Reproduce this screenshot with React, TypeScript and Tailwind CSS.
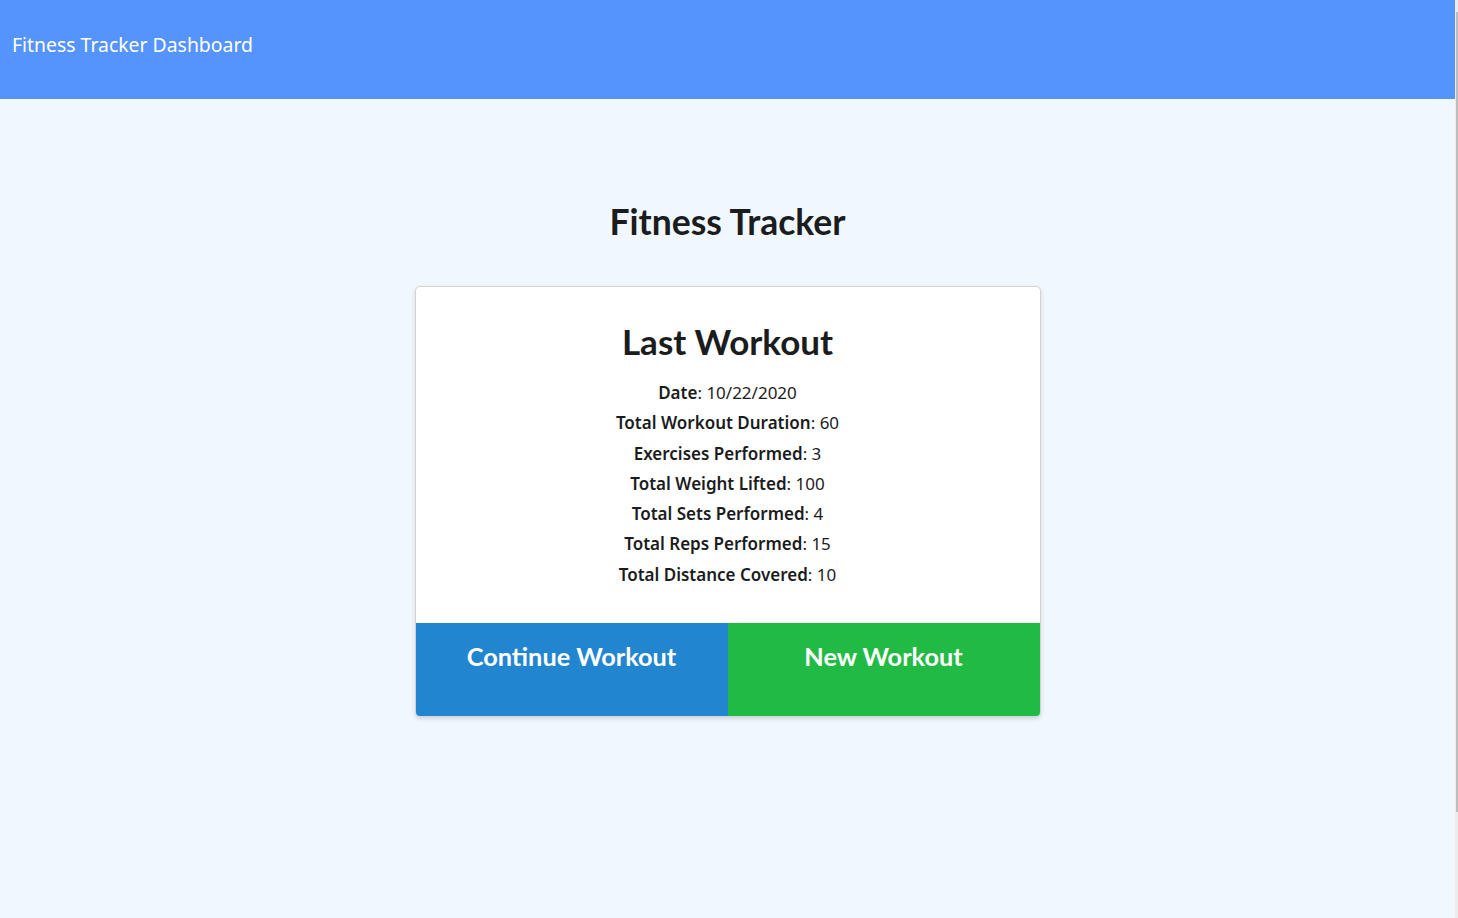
import React from "react";

const stats: [string, string][] = [
  ["Date", "10/22/2020"],
  ["Total Workout Duration", "60"],
  ["Exercises Performed", "3"],
  ["Total Weight Lifted", "100"],
  ["Total Sets Performed", "4"],
  ["Total Reps Performed", "15"],
  ["Total Distance Covered", "10"],
];

export default function App() {
  return (
    <div className="flex w-[1458px] h-[918px] overflow-hidden bg-[#f0f7ff]">
      <div className="flex flex-col w-[1455px] h-full">
        <header className="h-[99px] bg-[#5593fd] flex items-center px-[12px] pb-[9px]">
          <span className="text-white text-[19.4px] font-['Noto_Sans',sans-serif]">
            Fitness Tracker Dashboard
          </span>
        </header>
        <main className="flex flex-col items-center">
          <h1 className="mt-[101px] text-[35.5px] leading-[44px] font-bold text-[#1b1c1d] font-['Lato',sans-serif]">
            Fitness Tracker
          </h1>
          <div className="mt-[42px] w-[626px] bg-white border border-[#d4d4d5] rounded-[5px] shadow-[0_2px_4px_rgba(34,36,38,0.15)] flex flex-col overflow-hidden">
            <div className="flex flex-col items-center pt-[32px] pb-[33px]">
              <h2 className="text-[35px] leading-[44px] font-bold text-[#1b1c1d] font-['Lato',sans-serif]">
                Last Workout
              </h2>
              <div className="mt-[15px] flex flex-col items-center text-[17px] leading-[30.3px] text-[#1b1c1d] font-['Noto_Sans',sans-serif]">
                {stats.map(([k, v]) => (
                  <div key={k}>
                    <span className="font-semibold">{k}</span>: {v}
                  </div>
                ))}
              </div>
            </div>
            <div className="flex h-[93px]">
              <div className="flex-1 bg-[#2185d0] text-white flex justify-center pt-[17px] text-[25.3px] leading-[32px] font-bold font-['Lato',sans-serif]">
                Continue Workout
              </div>
              <div className="flex-1 bg-[#21ba45] text-white flex justify-center pt-[17px] text-[25.3px] leading-[32px] font-bold font-['Lato',sans-serif]">
                New Workout
              </div>
            </div>
          </div>
        </main>
      </div>
      <div className="w-[3px] h-full bg-[#ececec] flex flex-col pt-[12px]">
        <div className="h-[800px] w-[2px] ml-[1px] bg-[#bdbdbd]" />
      </div>
    </div>
  );
}
